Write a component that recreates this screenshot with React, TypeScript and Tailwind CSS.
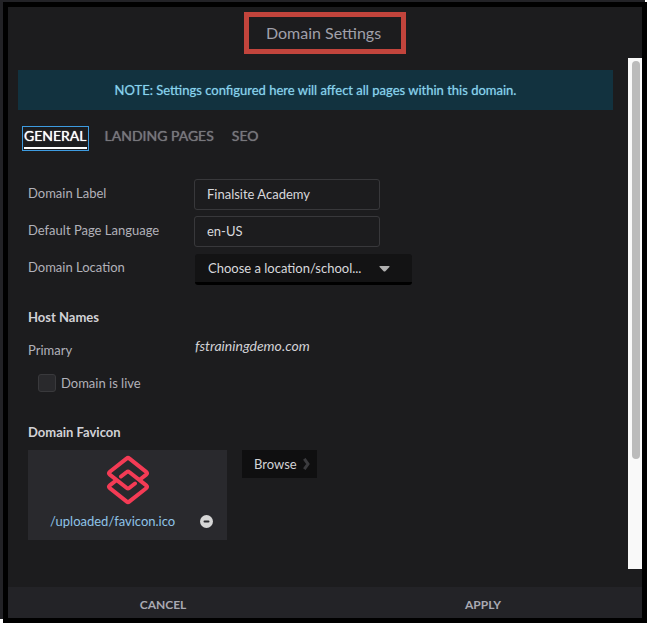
import type { ReactNode } from "react";

const tabs = ["GENERAL", "LANDING PAGES", "SEO"];

function Row({ id, label, children }: { id: string; label: string; children: ReactNode }) {
  return (
    <div className="flex min-h-[31px] items-start">
      <label htmlFor={id} className="w-[166px] shrink-0 pt-1 text-[#b1b1b9]">
        {label}
      </label>
      {children}
    </div>
  );
}

function FaviconLogo() {
  return (
    <svg width="44" height="50" viewBox="0 0 44 50" fill="none" stroke="#f43b55" strokeWidth="4" strokeLinecap="round" strokeLinejoin="round" aria-hidden="true">
      <path d="M34 24.5L40.2 19.6Q42 18.2 40.2 16.8L23.2 3.4Q22 2.4 20.8 3.4L3.8 16.8Q2 18.2 3.8 19.6L20.8 33Q22 34 23.2 33L29 28.5" />
      <path d="M10 25.5L3.8 30.4Q2 31.8 3.8 33.2L20.8 46.6Q22 47.6 23.2 46.6L40.2 33.2Q42 31.8 40.2 30.4L23.2 17Q22 16 20.8 17L15 21.5" />
    </svg>
  );
}

export default function App() {
  return (
    <div className="flex min-h-screen flex-col bg-white font-['Lato',sans-serif] text-[13px] leading-5">
      <div className="mr-[2px] h-[2px] bg-[#222226]" />
      <div className="flex grow">
        <div className="mb-1 w-[3px] bg-[#222226]" />
        <main className="flex grow flex-col border-5 border-black bg-[#1c1c1e]">
          <header className="flex h-[51px] items-center justify-center">
            <h1 className="flex h-[42px] items-center border-5 border-[#c2443c] pl-[17px] pr-5 text-[16px] text-[#a0a0aa]">
              Domain Settings
            </h1>
          </header>

          <div className="flex grow">
            <div className="flex grow flex-col pl-[10px] pr-[15px] pt-3">
              <p className="flex h-10 items-center justify-center bg-[#12323f] text-[#86d3ee] [text-shadow:0_0_1px_#86d3ee99]">
                NOTE: Settings configured here will affect all pages within this domain.
              </p>

              <nav className="mt-4 flex gap-[14px] pl-1 text-[14px]">
                {tabs.map((tab, i) => (
                  <button
                    key={tab}
                    type="button"
                    className={
                      i === 0
                        ? "h-[25px] border border-[#3d9be0] px-px text-white [text-shadow:0_0_1px_#ffffff]"
                        : "h-[25px] px-[2px] text-[#77777c] [text-shadow:0_0_1px_#77777c]"
                    }
                  >
                    <span className={i === 0 ? "block h-[21px] border-b-2 border-white leading-4" : "block h-[21px] leading-4"}>
                      {tab}
                    </span>
                  </button>
                ))}
              </nav>

              <form className="flex flex-col pl-[10px] pt-7">
                <div className="flex flex-col gap-[6px]">
                  <Row id="label" label="Domain Label">
                    <input id="label" defaultValue="Finalsite Academy" className="h-[31px] w-[186px] rounded-[3px] border border-[#38383b] bg-transparent px-3 pb-px text-[#d8d8dc]" />
                  </Row>
                  <Row id="language" label="Default Page Language">
                    <input id="language" defaultValue="en-US" className="h-[31px] w-[186px] rounded-[3px] border border-[#38383b] bg-transparent px-3 pb-px text-[#d8d8dc]" />
                  </Row>
                  <Row id="location" label="Domain Location">
                    <div className="relative ml-px mt-px h-[31px] w-[217px]">
                      <select id="location" className="h-full w-full appearance-none rounded-[3px] border-b-3 border-black bg-[#131314] pl-[13px] text-[#d8d8dc]">
                        <option>Choose a location/school...</option>
                      </select>
                      <svg className="pointer-events-none absolute right-[22px] top-3" width="11" height="6" viewBox="0 0 11 6" aria-hidden="true">
                        <path d="M1 0h9q1 0 .4.9L6.4 5.2q-.9.8-1.8 0L.6.9Q0 0 1 0z" fill="#b0b0b0" />
                      </svg>
                    </div>
                  </Row>
                </div>

                <h2 className="mt-[22px] font-bold text-[#d2d2d6]">Host Names</h2>
                <div className="mt-[9px] flex">
                  <span className="w-[167px] pt-1 text-[#b1b1b9]">Primary</span>
                  <em className="text-[14px] leading-5 text-[#d2d2d6]">fstrainingdemo.com</em>
                </div>
                <label className="mt-[13px] flex items-center gap-[5px] pl-[10px] text-[#b1b1b9]">
                  <input type="checkbox" className="size-[18px] appearance-none rounded-[3px] border border-[#39393c] bg-[#29292c]" />
                  Domain is live
                </label>

                <h2 className="mt-[29px] font-bold text-[#d2d2d6]">Domain Favicon</h2>
                <div className="mt-2 flex items-start gap-[15px]">
                  <div className="flex h-[90px] w-[199px] flex-col items-center bg-[#29292d] pt-[5px]">
                    <FaviconLogo />
                    <div className="mt-[6px] flex w-full items-center justify-between pl-[22px] pr-[14px]">
                      <a href="#favicon" className="text-[#8ec3e8]">/uploaded/favicon.ico</a>
                      <button type="button" aria-label="Remove favicon">
                        <svg width="13" height="13" viewBox="0 0 13 13" aria-hidden="true">
                          <circle cx="6.5" cy="6.5" r="6.5" fill="#d6d6d6" />
                          <rect x="3.5" y="5.5" width="6" height="2" rx="1" fill="#29292d" />
                        </svg>
                      </button>
                    </div>
                  </div>
                  <button type="button" className="flex h-7 w-[75px] items-center justify-between bg-[#0f0f10] pl-3 pr-[7px] text-[#d2d2d6]">
                    Browse
                    <svg width="7" height="12" viewBox="0 0 7 12" fill="none" stroke="#3b3b3e" strokeWidth="3" aria-hidden="true">
                      <path d="M1.3 .8l3.7 5.2-3.7 5.2" />
                    </svg>
                  </button>
                </div>
              </form>
            </div>

            <div className="mb-[18px] w-[14px] shrink-0 bg-[#f9f9f9] pl-1 pt-[3px]">
              <div className="h-[398px] w-2 rounded-full bg-[#bbbbbb]" />
            </div>
          </div>

          <footer className="bg-[#232327]">
            <div className="-ml-[5px] -mr-px grid h-[31px] grid-cols-2 text-[12px] font-bold text-[#a9a9b2]">
              <button type="button" className="pt-1">CANCEL</button>
              <button type="button" className="pt-1">APPLY</button>
            </div>
          </footer>
        </main>
      </div>
    </div>
  );
}
